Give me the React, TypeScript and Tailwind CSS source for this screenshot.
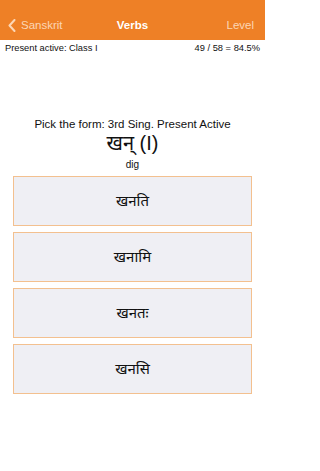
const options = ["खनति", "खनामि", "खनतः", "खनसि"];

export default function App() {
  return (
    <div
      className="w-[265px] h-[471px] bg-white flex flex-col"
      style={{ fontFamily: '"Liberation Sans", "Noto Sans", "Noto Sans Devanagari", sans-serif' }}
    >
      <div className="h-[40px] bg-[#ee8026] flex items-end pb-[6px] px-[8px] relative">
        <div className="flex items-center text-[#fcd6b5] text-[11.5px]">
          <svg width="8" height="13" viewBox="0 0 8 13" fill="none">
            <path d="M6.5 1 1.5 6.5 6.5 12" stroke="currentColor" strokeWidth="2" strokeLinecap="round" strokeLinejoin="round" />
          </svg>
          <span className="ml-[5px]">Sanskrit</span>
        </div>
        <div className="absolute left-0 right-0 bottom-[6px] text-center text-white text-[11.5px] font-bold">
          Verbs
        </div>
        <div className="ml-auto mr-[3px] text-[#fcd6b5] text-[11.5px]">Level</div>
      </div>

      <div className="flex justify-between px-[5px] pt-[2px] text-[9.3px] text-[#111]">
        <span>Present active: Class I</span>
        <span>49 / 58 = 84.5%</span>
      </div>

      <div className="mt-[62px] flex flex-col items-center text-[#111]">
        <div className="text-[11.5px] leading-[12px]">Pick the form: 3rd Sing. Present Active</div>
        <div className="text-[20px] leading-[26px]">खन् (I)</div>
        <div className="mt-[3px] text-[10px] leading-[12px]">dig</div>
      </div>

      <div className="mt-[5px] px-[13px] flex flex-col gap-[6px]">
        {options.map((o) => (
          <div
            key={o}
            className="h-[50px] bg-[#efeff4] border border-[#f3c08f] flex items-center justify-center text-[15px] text-[#111]"
          >
            {o}
          </div>
        ))}
      </div>
    </div>
  );
}
